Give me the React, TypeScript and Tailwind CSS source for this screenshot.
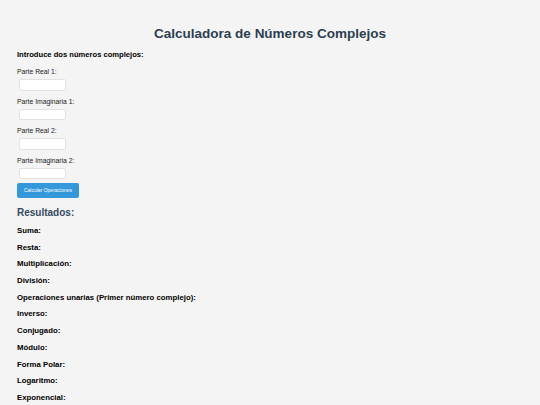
const FIELDS = ["Parte Real 1:", "Parte Imaginaria 1:", "Parte Real 2:", "Parte Imaginaria 2:"]

const RESULTS = [
  "Suma:",
  "Resta:",
  "Multiplicación:",
  "División:",
  "Operaciones unarias (Primer número complejo):",
  "Inverso:",
  "Conjugado:",
  "Módulo:",
  "Forma Polar:",
  "Logaritmo:",
  "Exponencial:",
]

export default function App() {
  return (
    <div className="min-h-screen bg-[#f4f4f4] px-[17px] font-['Liberation_Sans',Arial,sans-serif] text-black">
      <h1 className="pt-[24px] text-center text-[13.5px] leading-[20px] font-bold text-[#2c3e50]">
        Calculadora de Números Complejos
      </h1>

      <h3 className="mt-[5px] text-[7.6px] leading-[11px] font-bold">Introduce dos números complejos:</h3>

      <div className="mt-[1px] flex flex-col">
        {FIELDS.map((label) => (
          <div key={label} className="mt-[6px] flex flex-col items-start">
            <label className="text-[6.8px] leading-[9px] text-[#222]">{label}</label>
            <input
              type="text"
              className="mt-[3px] ml-[2px] h-[11.5px] w-[47px] rounded-[2px] border border-[#e2e2e2] bg-white"
            />
          </div>
        ))}
      </div>

      <button className="mt-[3.5px] block h-[15px] w-[62px] rounded-[2px] bg-[#3498db] text-[5px] leading-[15px] text-white">
        Calcular Operaciones
      </button>

      <h2 className="mt-[8px] text-[10px] leading-[14px] font-bold text-[#34495e]">Resultados:</h2>

      <div className="mt-[3.5px] flex flex-col">
        {RESULTS.map((r) => (
          <p key={r} className="h-[16.7px] text-[7.8px] leading-[16.7px] font-bold">
            {r}
          </p>
        ))}
      </div>
    </div>
  )
}
